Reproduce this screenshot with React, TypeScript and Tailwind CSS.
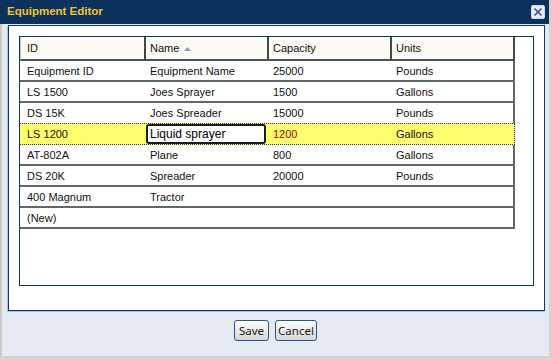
import React from "react";

type Row = { id: string; name: string; capacity: string; units: string };

const rows: Row[] = [
  { id: "Equipment ID", name: "Equipment Name", capacity: "25000", units: "Pounds" },
  { id: "LS 1500", name: "Joes Sprayer", capacity: "1500", units: "Gallons" },
  { id: "DS 15K", name: "Joes Spreader", capacity: "15000", units: "Pounds" },
  { id: "LS 1200", name: "Liquid sprayer", capacity: "1200", units: "Gallons" },
  { id: "AT-802A", name: "Plane", capacity: "800", units: "Gallons" },
  { id: "DS 20K", name: "Spreader", capacity: "20000", units: "Pounds" },
  { id: "400 Magnum", name: "Tractor", capacity: "", units: "" },
  { id: "(New)", name: "", capacity: "", units: "" },
];

const selected = 3;

const App: React.FC = () => {
  return (
    <div className="w-[552px] h-[359px] bg-[#d5d2ce] overflow-hidden font-['Liberation_Sans',Arial,sans-serif]">
      <div className="w-[549px] h-[356px] flex flex-col">
        {/* Title bar */}
        <div className="h-[24px] bg-[#0a325c] flex items-center justify-between pl-[7px] pr-[4px]">
          <span className="text-[11.5px] font-bold text-[#f3c42f] leading-none">
            Equipment Editor
          </span>
          <div className="w-[14px] h-[14px] bg-[#e9edf7] rounded-[2px] border border-[#cfd6ea] flex items-center justify-center">
            <svg width="10" height="10" viewBox="0 0 10 10">
              <path d="M1.5 1.5 L8.5 8.5 M8.5 1.5 L1.5 8.5" stroke="#3b4c9e" strokeWidth="1.6" />
            </svg>
          </div>
        </div>

        {/* Body */}
        <div className="flex-1 bg-[#e4e9f2] border-l-2 border-[#cdc9c5] flex flex-col pt-[1px]">
          <div className="ml-[6px] w-[537px] h-[286px] bg-white border border-[#0c3660] shadow-[-1px_1px_0_#a3c4e8] pt-[10px] pl-[10px] pb-[24px]">
            <div className="w-[515px] h-[250px] border border-[#0c3660] flex flex-col text-[11px] text-[#111]">
              {/* Header */}
              <div className="flex h-[24px] shrink-0 bg-[#fbfbf3]">
                <div className="w-[126px] border-l border-[#c4c4c4] border-r-2 border-b-2 border-r-[#3d4b51] border-b-[#46525a] pl-[6px] pt-[1px] flex items-center">
                  ID
                </div>
                <div className="w-[123px] border-r-2 border-b-2 border-r-[#3d4b51] border-b-[#46525a] pl-[4px] pt-[1px] flex items-center gap-[5px]">
                  Name
                  <svg width="7" height="4" viewBox="0 0 7 4">
                    <path d="M0 4 L3.5 0 L7 4 Z" fill="#7f9dcb" />
                  </svg>
                </div>
                <div className="w-[123px] border-r-2 border-b-2 border-r-[#3d4b51] border-b-[#46525a] pl-[4px] pt-[1px] flex items-center">
                  Capacity
                </div>
                <div className="w-[123px] border-r-2 border-b-2 border-r-[#3d4b51] border-b-[#46525a] pl-[4px] pt-[1px] flex items-center">
                  Units
                </div>
                <div className="flex-1 bg-white" />
              </div>

              {/* Rows */}
              {rows.map((r, i) => {
                const isSel = i === selected;
                const beforeSel = i === selected - 1;
                const rowClass = isSel
                  ? "h-[22px] bg-[#ffff6e] border-y border-r border-dotted border-[#333]"
                  : beforeSel
                  ? "h-[20px] border-r-2 border-[#5e6868]"
                  : "h-[21px] border-b-2 border-r-2 border-[#5e6868]";
                return (
                  <div key={i} className={`w-[495px] flex shrink-0 ${rowClass}`}>
                    <div className="w-[126px] pl-[7px] pt-[1px] flex items-center">{r.id}</div>
                    <div className="w-[123px] flex items-center">
                      {isSel ? (
                        <div className="w-[120px] h-[20px] bg-white border-2 border-[#1c1c1c] rounded-[3px] pl-[2px] flex items-center text-[12px] text-black">
                          {r.name}
                        </div>
                      ) : (
                        <span className="pl-[4px] pt-[1px]">{r.name}</span>
                      )}
                    </div>
                    <div className={`w-[123px] pl-[4px] pt-[1px] flex items-center ${isSel ? "text-[#b00000]" : ""}`}>
                      {r.capacity}
                    </div>
                    <div className="flex-1 pl-[4px] pt-[1px] flex items-center">{r.units}</div>
                  </div>
                );
              })}
              <div className="flex-1" />
            </div>
          </div>

          {/* Buttons */}
          <div className="flex justify-center gap-[6px] mt-[9px] font-['Noto_Sans',sans-serif] text-[11.5px] text-[#1a1a1a]">
            <button className="w-[35px] h-[21px] border border-[#24588a] rounded-[3px] bg-linear-to-b from-white to-[#d5d5d5] leading-none">
              Save
            </button>
            <button className="w-[42px] h-[21px] border border-[#24588a] rounded-[3px] bg-linear-to-b from-white to-[#d5d5d5] leading-none">
              Cancel
            </button>
          </div>
        </div>
      </div>
    </div>
  );
};

export default App;
